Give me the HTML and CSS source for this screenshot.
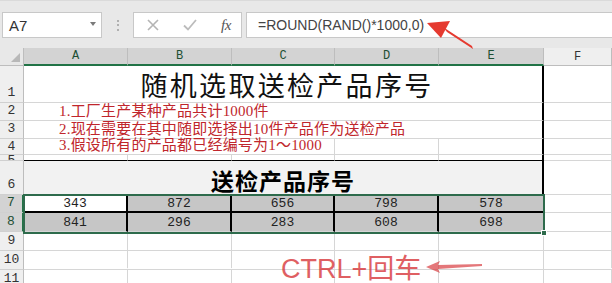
FILE: index.html
```html
<!DOCTYPE html>
<html lang="zh">
<head>
<meta charset="utf-8">
<title>随机选取送检产品序号</title>
<link rel="stylesheet" href="styles.css">
</head>
<body>
<div class="app">
  <div class="toolbar">
    <div class="namebox"><span class="ref">A7</span><span class="dd"></span></div>
    <div class="sep"><i></i><i></i><i></i></div>
    <div class="btns">
      <svg class="ico" width="14" height="14" viewBox="0 0 14 14"><path d="M2 2 L12 12 M12 2 L2 12" stroke="#b4b4b4" stroke-width="1.6" fill="none"/></svg>
      <svg class="ico" width="16" height="14" viewBox="0 0 16 14"><path d="M2 7.5 L6 11.5 L14 2" stroke="#bcbcbc" stroke-width="1.8" fill="none"/></svg>
      <span class="fx">fx</span>
    </div>
    <div class="formula">=ROUND(RAND()*1000,0)</div>
  </div>

  <div class="sheet">
    <div class="corner"><span class="tri"></span></div>
    <div class="ch sel">A</div>
    <div class="ch sel">B</div>
    <div class="ch sel">C</div>
    <div class="ch sel">D</div>
    <div class="ch sel">E</div>
    <div class="ch">F</div>

    <div class="rh">1</div>
    <div class="c s5 bR title1">随机选取送检产品序号</div>
    <div class="c"></div>

    <div class="rh">2</div>
    <div class="c s5 bR note">1.工厂生产某种产品共计1000件</div>
    <div class="c"></div>

    <div class="rh">3</div>
    <div class="c s5 bR note">2.现在需要在其中随即选择出10件产品作为送检产品</div>
    <div class="c"></div>

    <div class="rh r4">4</div>
    <div class="c s3 note">3.假设所有的产品都已经编号为1～1000</div>
    <div class="c"></div>
    <div class="c bR"></div>
    <div class="c"></div>

    <div class="rh r5">5</div>
    <div class="c bB"></div>
    <div class="c bB"></div>
    <div class="c bB"></div>
    <div class="c bB"></div>
    <div class="c bB bR"></div>
    <div class="c"></div>

    <div class="rh">6</div>
    <div class="c s5 bR bB title2">送检产品序号</div>
    <div class="c"></div>

    <div class="rh sel">7</div>
    <div class="c d d7 act">343</div>
    <div class="c d d7">872</div>
    <div class="c d d7">656</div>
    <div class="c d d7">798</div>
    <div class="c d d7 last">578</div>
    <div class="c"></div>

    <div class="rh sel">8</div>
    <div class="c d">841</div>
    <div class="c d">296</div>
    <div class="c d">283</div>
    <div class="c d">608</div>
    <div class="c d last">698</div>
    <div class="c"></div>

    <div class="rh">9</div>
    <div class="c"></div><div class="c"></div><div class="c"></div><div class="c"></div><div class="c"></div><div class="c"></div>

    <div class="rh">10</div>
    <div class="c"></div><div class="c"></div><div class="c"></div><div class="c"></div><div class="c"></div><div class="c"></div>

    <div class="rh">11</div>
    <div class="c"></div><div class="c"></div><div class="c"></div><div class="c"></div><div class="c"></div><div class="c"></div>
  </div>

  <div class="selection"></div>
  <div class="handle"></div>

  <div class="dash"></div>
  <div class="wm">CTRL+回车
    <svg class="wm-arrow" width="58" height="14" viewBox="0 0 58 14"><path d="M0 7 L14 1 L12 5 L56 4 L56 6 L12 9 L14 13 Z" fill="#d8383c" opacity="0.85"/></svg>
  </div>

  <svg class="arrow" width="612" height="60" viewBox="0 0 612 60">
    <polygon points="427,23 450,21 441,38" fill="#e53a30"/>
    <polygon points="443,27 447,32 473,49 472,46" fill="#e53a30"/>
  </svg>
</div>
</body>
</html>
```

FILE: styles.css
```css
* { box-sizing: border-box; }
html, body { margin: 0; padding: 0; }
body { width: 612px; height: 283px; overflow: hidden; background: #fff; }

.app {
  position: relative;
  width: 612px;
  height: 283px;
  overflow: hidden;
  font-family: "Liberation Sans", Arial, sans-serif;
}

/* toolbar */
.toolbar {
  height: 48px;
  background: #e8e8e8;
  border-top: 1px solid #dadada;
  display: flex;
  align-items: flex-start;
  padding: 11px 0 0 2px;
}
.toolbar > * { flex-shrink: 0; }
.namebox {
  width: 100px;
  height: 26px;
  background: #fff;
  border: 1px solid #c8c8c8;
  display: flex;
  align-items: center;
  justify-content: space-between;
  padding: 0 5px 0 6px;
}
.ref { font-size: 15px; color: #333; }
.dd {
  width: 0; height: 0;
  border-left: 3.5px solid transparent;
  border-right: 3.5px solid transparent;
  border-top: 4px solid #7a7a7a;
  margin-top: -2px;
}
.sep {
  width: 31px;
  height: 26px;
  display: flex;
  flex-direction: column;
  align-items: center;
  justify-content: center;
  gap: 2.5px;
}
.sep i { display: block; width: 2px; height: 2px; background: #b0b0b0; }
.btns {
  width: 109px;
  height: 26px;
  background: #fff;
  border: 1px solid #c8c8c8;
  display: flex;
  align-items: center;
  padding-left: 12px;
  gap: 22px;
}
.fx {
  font-family: "Liberation Serif", serif;
  font-style: italic;
  font-size: 15px;
  color: #555;
  margin-left: 1px;
  letter-spacing: -0.5px;
}
.formula {
  margin-left: 4px;
  width: 380px;
  height: 26px;
  background: #fff;
  border: 1px solid #c8c8c8;
  border-right: none;
  padding-left: 11px;
  font-size: 14px;
  color: #444;
  line-height: 24px;
}

/* sheet */
.sheet {
  display: grid;
  grid-template-columns: 24px 104px 104px 103px 104px 105px 68px;
  grid-template-rows: 18px 37px 18px 18px 16px 6px 34px 18px 19px 19px 19px 19px;
  font-family: "Liberation Mono", monospace;
}
.corner {
  background: #e8e8e8;
  border-right: 1px solid #bdbdbd;
  border-bottom: 1px solid #bdbdbd;
  position: relative;
}
.tri {
  position: absolute;
  right: 3px; bottom: 3px;
  width: 0; height: 0;
  border-left: 9px solid transparent;
  border-bottom: 9px solid #b8b8b8;
}
.ch {
  background: #efefef;
  border-right: 1px solid #bdbdbd;
  border-bottom: 1px solid #bdbdbd;
  font-size: 12px;
  color: #333;
  display: flex;
  align-items: flex-end;
  justify-content: center;
  padding-bottom: 1px;
  line-height: 14px;
}
.ch.sel {
  background: #d3d3d3;
  border-bottom: 2px solid #217346;
  color: #1d4f33;
}
.rh {
  background: #efefef;
  border-right: 1px solid #bdbdbd;
  border-bottom: 1px solid #d0d0d0;
  font-size: 13px;
  color: #333;
  display: flex;
  align-items: flex-end;
  justify-content: center;
  line-height: 15px;
  padding-bottom: 2px;
  overflow: hidden;
}
.rh.r4 { padding-bottom: 0; line-height: 14px; }
.rh.r5 { align-items: flex-start; line-height: 12px; padding: 0; }
.rh.sel {
  background: #d3d3d3;
  border-right: 2px solid #217346;
  color: #1d4f33;
}

.c {
  border-right: 1px solid #d6d6d6;
  border-bottom: 1px solid #d6d6d6;
  min-width: 0;
}
.s5 { grid-column: span 5; }
.s3 { grid-column: span 3; }
.bR { border-right: 2px solid #000; }
.bB { border-bottom: 1px solid #000; }

.title1 {
  display: flex;
  align-items: flex-end;
  justify-content: center;
  font-family: "Noto Sans CJK SC", sans-serif;
  font-size: 27px;
  letter-spacing: 2.3px;
  line-height: 32px;
  color: #111;
  padding-bottom: 1px;
  padding-left: 8px;
}
.note {
  font-family: "Liberation Serif", "Noto Sans CJK SC", serif;
  font-size: 15px;
  color: #c0262c;
  padding-left: 35px;
  line-height: 17px;
  white-space: nowrap;
  overflow: visible;
  display: flex;
  align-items: flex-end;
  letter-spacing: 0.2px;
}
.title2 {
  background: #f2f2f2;
  display: flex;
  align-items: center;
  justify-content: center;
  font-family: "Noto Sans CJK SC", sans-serif;
  font-weight: 700;
  font-size: 23px;
  letter-spacing: 1px;
  color: #000;
  padding-top: 4px;
}
.d {
  background: #c6c6c6;
  border-right: 2px solid #000;
  font-size: 13px;
  color: #222;
  display: flex;
  align-items: center;
  justify-content: center;
  line-height: 15px;
  padding-top: 1px;
}
.d7 { border-bottom: 2px solid #000; }
.d.act { background: #fff; }
.d.last { border-right: 1px solid #c6c6c6; }

.selection {
  position: absolute;
  left: 23px;
  top: 194px;
  width: 522px;
  height: 40px;
  border: 2px solid #2e6b4c;
  pointer-events: none;
}
.handle {
  position: absolute;
  left: 541px;
  top: 230px;
  width: 6px;
  height: 6px;
  background: #2e6b4c;
  border: 1px solid #fff;
}

.dash {
  position: absolute;
  left: 70px;
  top: 268px;
  width: 542px;
  border-top: 1px dashed rgba(255,255,255,0.9);
}
.wm {
  position: absolute;
  left: 281px;
  top: 247px;
  font-family: "Liberation Sans", "Noto Sans CJK SC", sans-serif;
  font-size: 27px;
  color: #d8383c;
  opacity: 0.8;
  display: flex;
  align-items: center;
  gap: 5px;
  white-space: nowrap;
}
.arrow {
  position: absolute;
  left: 0;
  top: 0;
}
```
